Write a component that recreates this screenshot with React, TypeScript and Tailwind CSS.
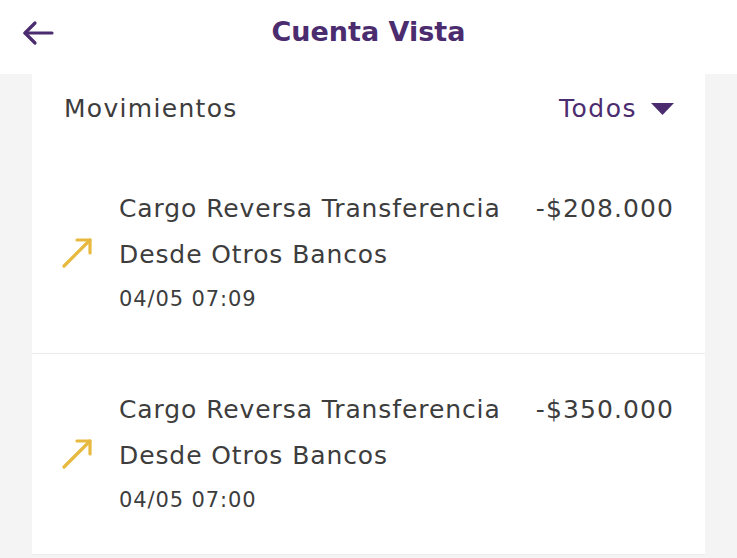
const movimientos = [
  { id: 1, line1: "Cargo Reversa Transferencia", line2: "Desde Otros Bancos", date: "04/05 07:09", amount: "-$208.000" },
  { id: 2, line1: "Cargo Reversa Transferencia", line2: "Desde Otros Bancos", date: "04/05 07:00", amount: "-$350.000" },
];

function BackArrow() {
  return (
    <svg width="32" height="26" viewBox="0 0 32 26" fill="none" stroke="#4b2c6f" strokeWidth="3.2" strokeLinecap="round" strokeLinejoin="round">
      <path d="M30 13H3" />
      <path d="M13 3L3 13l10 10" />
    </svg>
  );
}

function OutArrow() {
  return (
    <svg width="32" height="32" viewBox="0 0 32 32" fill="none" stroke="#e8b93f" strokeWidth="3.2" strokeLinecap="round" strokeLinejoin="round">
      <path d="M3 29L29 3" />
      <path d="M16 3h13v13" />
    </svg>
  );
}

export default function App() {
  return (
    <main
      className="h-[558px] w-[737px] overflow-hidden bg-[#f4f4f4]"
      style={{ fontFamily: '"DejaVu Sans", "Noto Sans", sans-serif' }}
    >
      <header className="relative flex h-[74px] items-center justify-center bg-white pb-[9px]">
        <button className="absolute left-[22px] top-[20px]">
          <BackArrow />
        </button>
        <h1 className="text-[27px] font-bold text-[#4b2c6f]">Cuenta Vista</h1>
      </header>

      <section className="mx-[32px] bg-white">
        <div className="flex h-[79px] items-start justify-between pl-[32px] pr-[31px] pt-[16px]">
          <span className="text-[25px] tracking-[1.3px] text-[#3d3d3d]">Movimientos</span>
          <button className="flex items-center gap-[14px] text-[25px] tracking-[1.5px] text-[#4b2c6f]">
            Todos
            <svg width="23" height="12" viewBox="0 0 23 12">
              <path d="M0 0 L23 0 L11.5 12 Z" fill="#4b2c6f" />
            </svg>
          </button>
        </div>

        {movimientos.map((m) => (
          <div
            key={m.id}
            className="flex h-[201px] items-center border-b border-[#ececec] pl-[29px] pr-[31px]"
          >
            <OutArrow />
            <div className="ml-[26px] flex flex-1 items-start justify-between">
              <div className="text-[#3d3d3d]">
                <p className="text-[25px] leading-[46px] tracking-[0.9px]">{m.line1}</p>
                <p className="text-[25px] leading-[46px] tracking-[0.9px]">{m.line2}</p>
                <p className="text-[21px] leading-[42px] tracking-[0.9px]">{m.date}</p>
              </div>
              <span className="text-[25px] leading-[46px] tracking-[1.1px] text-[#3d3d3d]">{m.amount}</span>
            </div>
          </div>
        ))}
      </section>
    </main>
  );
}
